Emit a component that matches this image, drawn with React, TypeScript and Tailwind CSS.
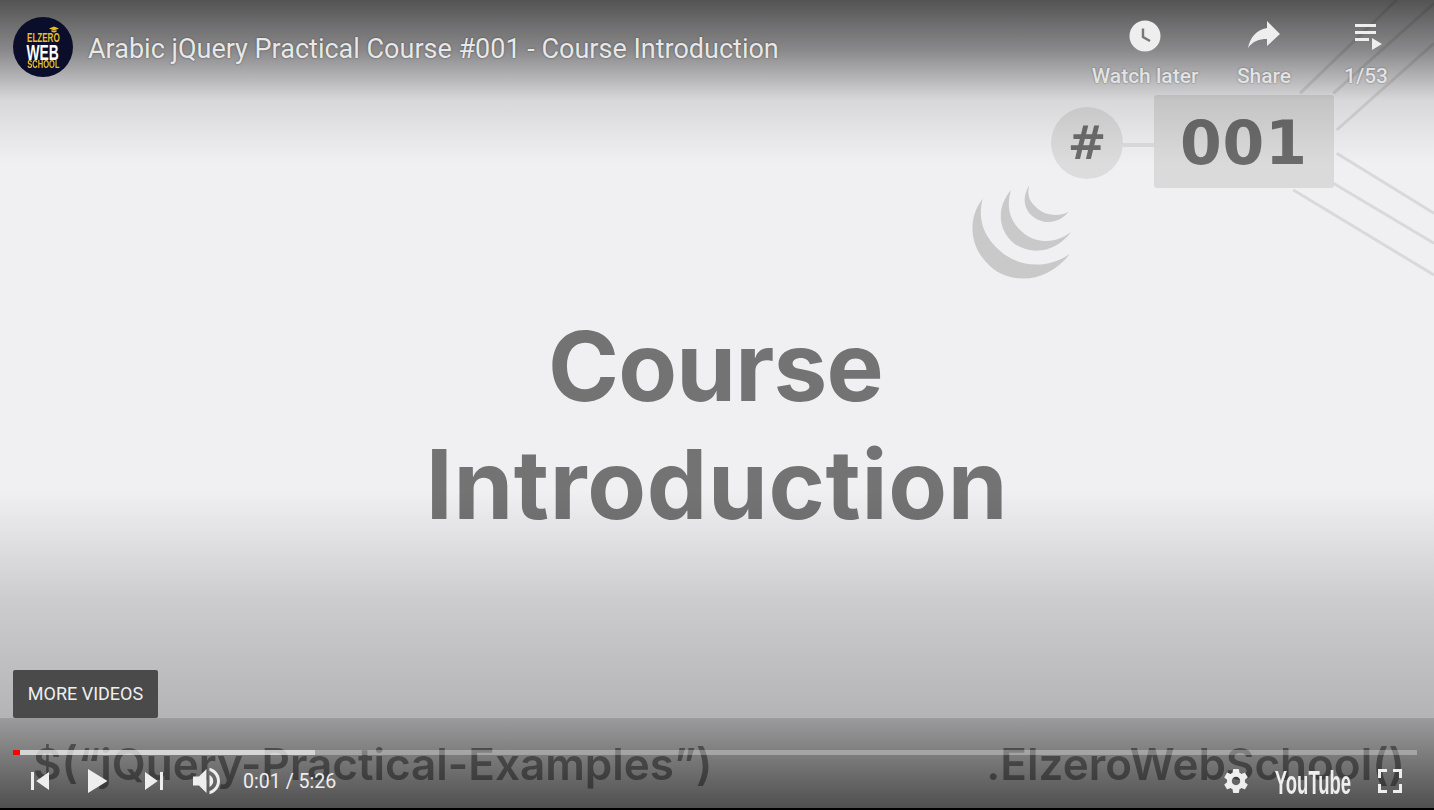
import React from "react";

const ROBOTO = "font-['Roboto',sans-serif]";

function Icon36({ d, className }: { d: string; className?: string }) {
  return (
    <svg viewBox="0 0 36 36" className={`w-[54px] h-[54px] shrink-0 ${className ?? ""}`} fill="#eeeeee">
      <path d={d} />
    </svg>
  );
}

function ChannelLogo() {
  return (
    <div className="relative w-[60px] h-[60px] shrink-0 rounded-full bg-[#0a0e2a] flex flex-col items-center pt-[15px] font-['Liberation_Sans',sans-serif] font-bold overflow-hidden blur-[0.3px]">
      <svg viewBox="0 0 10 6" className="absolute left-[36px] top-[9px] w-[10px] h-[7px]" fill="#e8b923">
        <path d="M5 0 10 2 5 4 0 2Z M2.5 3.6 5 4.6 7.5 3.6V5.2C6 6.2 4 6.2 2.5 5.2Z" />
      </svg>
      <span className="text-[13px] leading-[12px] text-[#eebd2b] scale-x-[.62] whitespace-nowrap">ELZERO</span>
      <span className="text-[22px] leading-[17px] text-white scale-x-[.63] whitespace-nowrap">WEB</span>
      <span className="text-[10px] leading-[8px] text-[#eebd2b] scale-x-[.76] whitespace-nowrap">SCHOOL</span>
    </div>
  );
}

function TopAction({ label, width, children }: { label: string; width: string; children: React.ReactNode }) {
  return (
    <div className={`flex flex-col items-center ${width}`}>
      <div className="h-[36px] flex items-center justify-center">{children}</div>
      <span className="mt-[10px] text-[21px] leading-[26px] font-medium text-[#e3e3e3] whitespace-nowrap [text-shadow:0_0_2px_rgba(0,0,0,.45)]">
        {label}
      </span>
    </div>
  );
}

// circuit lines + jQuery swirl, coordinates taken from the 3x crop
function VideoArt() {
  return (
    <svg viewBox="0 0 1452 870" className="absolute left-[950px] top-0 w-[484px] h-[290px] blur-[0.4px]">
      <g stroke="#d9d9db" strokeWidth="9" fill="none">
        <path d="M1050 280 1340 0" />
        <path d="M1150 280 1452 10" />
        <path d="M1160 390 1452 130" />
        <path d="M1160 460 1452 640" />
        <path d="M1150 550 1452 730" />
        <path d="M1030 570 1452 825" />
      </g>
      <g fill="#c9c9c9" transform="translate(-2 6)">
        <path d="M100 590C60 640 55 720 110 780C170 850 290 850 362 755C300 800 210 800 150 745C100 700 85 650 100 590Z" />
        <path d="M185 565C145 610 140 680 195 725C255 765 325 745 365 690C320 725 265 725 225 695C180 660 170 615 185 565Z" />
        <path d="M240 550C215 590 225 630 260 650C300 672 335 655 358 630C325 645 290 640 265 620C240 600 232 580 240 550Z" />
      </g>
    </svg>
  );
}

export default function App() {
  return (
    <div className={`relative w-[1434px] h-[810px] overflow-hidden bg-black ${ROBOTO}`}>
      {/* video frame */}
      <div className="absolute inset-x-0 top-0 h-[808px] bg-[#f0eff2] overflow-hidden">
        <VideoArt />
        <div className="absolute left-[1051px] top-[107px] w-[72px] h-[72px] rounded-full bg-[#dcdcdc] flex items-center justify-center font-['DejaVu_Sans',sans-serif] font-bold text-[46px] text-[#6c6c6c] blur-[0.4px]">
          #
        </div>
        <div className="absolute left-[1123px] top-[143px] w-[31px] h-[4px] bg-[#dddddd]" />
        <div className="absolute left-[1154px] top-[95px] w-[180px] h-[93px] rounded-[3px] bg-[#dadada] flex items-center justify-center pt-[3px] font-['DejaVu_Sans',sans-serif] font-bold text-[60px] tracking-[1px] leading-none text-[#6b6b6b] blur-[0.5px]">
          001
        </div>

        <div className="flex flex-col items-center pt-[307px] font-['Inter',sans-serif] font-bold text-[96px] leading-[118px] text-[#737373] blur-[0.5px]">
          <span className="tracking-[-0.8px] -ml-[3px]">Course</span>
          <span className="tracking-[0.7px]">Introduction</span>
        </div>

        {/* lower third */}
        <div className="absolute inset-x-0 bottom-0 h-[90px] bg-[#cfcfd1] flex justify-between pl-[33px] pr-[29px] pt-[17px] font-['Inter',sans-serif] font-semibold text-[44px] leading-[58px] text-[#7a7a7a] blur-[0.6px]">
          <span>$(“jQuery-Practical-Examples”)</span>
          <span>.ElzeroWebSchool()</span>
        </div>
      </div>

      {/* player gradients */}
      <div className="absolute inset-x-0 top-0 h-[165px] bg-[linear-gradient(to_bottom,rgba(0,0,0,.65)_0px,rgba(0,0,0,.43)_50px,rgba(0,0,0,.1)_100px,rgba(0,0,0,.02)_150px,rgba(0,0,0,0)_165px)]" />
      <div className="absolute inset-x-0 top-[490px] h-[318px] bg-[linear-gradient(to_bottom,rgba(0,0,0,0)_0px,rgba(0,0,0,.15)_110px,rgba(0,0,0,.25)_228px,rgba(0,0,0,.62)_318px)]" />

      {/* title bar */}
      <div className="absolute inset-x-0 top-0 flex items-start pl-[13px] pt-[17px]">
        <ChannelLogo />
        <h1 className="ml-[15px] mt-[16px] text-[27px] leading-[32px] font-normal text-[#e8e8e8] whitespace-nowrap [text-shadow:0_0_2px_rgba(0,0,0,.5)]">
          Arabic jQuery Practical Course #001 - Course Introduction
        </h1>
        <div className="ml-auto flex pr-[25px]">
          <TopAction label="Watch later" width="w-[120px]">
            <svg viewBox="0 0 32 32" className="w-[32px] h-[32px] mt-[2px]">
              <circle cx="16" cy="16" r="15.5" fill="#eeeeee" />
              <path d="M14 8.5V17L21 21" stroke="#777777" strokeWidth="2.4" fill="none" />
            </svg>
          </TopAction>
          <TopAction label="Share" width="w-[118px]">
            <svg viewBox="0 0 32 30" className="w-[32px] h-[30px] mt-[2px]" fill="#eeeeee">
              <path d="M19 0 32 13 19 25V18C11 18 5 20 0 27 2 17 8 9 19 7Z" />
            </svg>
          </TopAction>
          <TopAction label="1/53" width="w-[86px]">
            <svg viewBox="0 0 28 28" className="w-[28px] h-[28px] mt-[3px] ml-[3px]" fill="#eeeeee">
              <path d="M1 1H22V4H1Z M1 8H22V11H1Z M1 15H15V18H1Z M18 15 28 21 18 27Z" />
            </svg>
          </TopAction>
        </div>
      </div>

      {/* more videos */}
      <button className="absolute left-[13px] top-[670px] w-[145px] h-[48px] pb-[2px] rounded-[2px] bg-[#4a4a4a] text-[18px] font-normal text-[#efefef] flex items-center justify-center whitespace-nowrap">
        MORE VIDEOS
      </button>

      {/* controls */}
      <div className="absolute inset-x-0 bottom-[2px] h-[58px] pl-[13px] pr-[17px]">
        <div className="relative h-[5px] bg-[rgba(255,255,255,.3)]">
          <div className="absolute inset-y-0 left-0 w-[302px] bg-[rgba(255,255,255,.55)]" />
          <div className="absolute inset-y-0 left-0 w-[7px] bg-[#f00]" />
        </div>
        <div className="flex items-center h-[54px] -mt-[1px]">
          <Icon36 d="m12 12h2v12h-2zm3.5 6 8.5 6V12z" />
          <Icon36 className="ml-[3px]" d="M12 26 18.5 22V14L12 10zM18.5 22 25 18 18.5 14z" />
          <Icon36 className="ml-[3px]" d="M12 24 20.5 18 12 12V24zM22 12v12h2V12h-2z" />
          <Icon36 d="M8 21H12L17 26V10L12 15H8V21ZM19 14V22C20.48 21.32 21.5 19.77 21.5 18C21.5 16.26 20.48 14.74 19 14ZM19 11.29C21.89 12.15 24 14.83 24 18C24 21.17 21.89 23.85 19 24.71V26.77C23.01 25.86 26 22.28 26 18C26 13.72 23.01 10.14 19 9.23V11.29Z" />
          <span className="ml-[8px] pt-[1px] text-[19.6px] text-[#eeeeee] whitespace-nowrap">0:01 / 5:26</span>
          <div className="ml-auto flex items-center">
            <Icon36 d="m23.94 18.78c.03-.25.05-.51.05-.78 0-.27-.02-.52-.05-.78l1.68-1.32c.15-.12.19-.33.09-.51l-1.6-2.76c-.09-.17-.31-.24-.48-.17l-1.99.8c-.41-.32-.86-.58-1.35-.78l-.3-2.12c-.02-.19-.19-.33-.39-.33l-3.2 0c-.2 0-.36.14-.39.33l-.3 2.12c-.48.2-.93.47-1.35.78l-1.99-.8c-.18-.07-.39 0-.48.17l-1.6 2.76c-.1.17-.05.39.09.51l1.68 1.32c-.03.25-.05.52-.05.78 0 .26.02.52.05.78l-1.68 1.32c-.15.12-.19.33-.09.51l1.6 2.76c.09.17.31.24.48.17l1.99-.8c.41.32.86.58 1.35.78l.3 2.12c.02.19.19.33.39.33l3.2 0c.2 0 .36-.14.39-.33l.3-2.12c.48-.2.93-.47 1.35-.78l1.99.8c.18.07.39 0 .48-.17l1.6-2.76c.09-.17.05-.39-.09-.51l-1.68-1.32zm-5.94 2.01c-1.54 0-2.8-1.25-2.8-2.8 0-1.54 1.25-2.8 2.8-2.8 1.54 0 2.8 1.25 2.8 2.8 0 1.54-1.25 2.8-2.8 2.8z" />
            <div className="w-[100px] h-[54px] flex justify-center pt-[3px] font-['Liberation_Sans',sans-serif] font-bold text-[33px] leading-[51px] text-[#eeeeee] scale-x-[.56] whitespace-nowrap">
              YouTube
            </div>
            <Icon36 d="M10 16h2v-4h4v-2H10zM20 10v2h4v4h2V10zM24 24h-4v2h6v-6h-2zM12 20h-2v6h6v-2h-4z" />
          </div>
        </div>
      </div>
    </div>
  );
}
